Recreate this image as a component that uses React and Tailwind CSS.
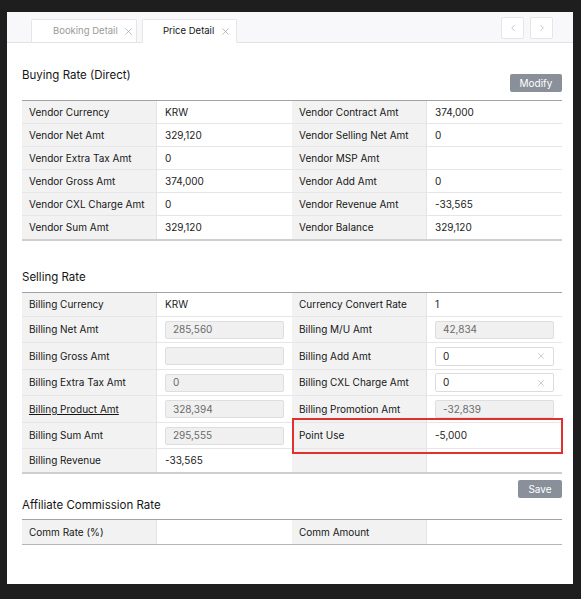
import { ChevronLeft, ChevronRight, X } from "lucide-react";

const buying = [
  ["Vendor Currency", "KRW", "Vendor Contract Amt", "374,000"],
  ["Vendor Net Amt", "329,120", "Vendor Selling Net Amt", "0"],
  ["Vendor Extra Tax Amt", "0", "Vendor MSP Amt", ""],
  ["Vendor Gross Amt", "374,000", "Vendor Add Amt", "0"],
  ["Vendor CXL Charge Amt", "0", "Vendor Revenue Amt", "-33,565"],
  ["Vendor Sum Amt", "329,120", "Vendor Balance", "329,120"],
];

function Label({ children, underline }) {
  return (
    <div
      className={`bg-[#f2f2f2] border-r border-[#e4e4e4] px-[7px] flex items-center whitespace-nowrap text-[#161616] ${
        underline ? "underline" : ""
      }`}
    >
      {children}
    </div>
  );
}

function Value({ children }) {
  return <div className="px-[8px] flex items-center whitespace-nowrap text-[#222]">{children}</div>;
}

function ReadInput({ value }) {
  return (
    <div className="px-[8px] flex items-center">
      <div className="w-[119px] h-[18px] bg-[#f0f0f0] border border-[#dedede] rounded-[2px] px-[7px] flex items-center text-[#6b6b6b]">
        {value}
      </div>
    </div>
  );
}

function EditInput({ value }) {
  return (
    <div className="px-[8px] flex items-center">
      <div className="w-[120px] h-[19px] bg-white border border-[#dcdcdc] rounded-[2px] px-[7px] flex items-center justify-between text-[#222]">
        <span>{value}</span>
        <X size={10} strokeWidth={2} className="text-[#c4c4c4]" />
      </div>
    </div>
  );
}

function Row({ h, children, last }) {
  return (
    <div
      className={`grid grid-cols-[135px_135px_135px_135px] ${h} ${
        last ? "" : "border-b border-[#e6e6e6]"
      }`}
    >
      {children}
    </div>
  );
}

function Title({ children, className = "" }) {
  return <div className={`text-[11.5px] leading-[16px] text-[#161616] ${className}`}>{children}</div>;
}

export default function App() {
  return (
    <div
      className="min-h-screen bg-[#1e1e1e] pt-[12px] pl-[7px] pb-[15px]"
      style={{ fontFamily: "Inter, 'Noto Sans', sans-serif" }}
    >
      <div className="bg-white w-[566px] h-[572px] flex flex-col text-[10px]">
        {/* tab bar */}
        <div className="h-[31px] bg-[#f8f8fa] border-b border-[#e2e2e6] flex items-end pl-[24px] pr-[20px]">
          <div className="h-[24px] w-[106px] -mb-px bg-white border border-[#e6e6e9] border-b-[#e2e2e6] rounded-t-[2px] flex items-center pl-[21px] whitespace-nowrap text-[#9a9a9a] text-[9.5px]">
            <span>Booking Detail</span>
            <X size={11} strokeWidth={1.4} className="ml-[5px] text-[#9a9a9a]" />
          </div>
          <div className="h-[24px] w-[95px] ml-[5px] -mb-px bg-white border border-[#e6e6e9] border-b-white rounded-t-[2px] flex items-center pl-[20px] whitespace-nowrap text-[#161616] text-[9.5px]">
            <span>Price Detail</span>
            <X size={11} strokeWidth={1.4} className="ml-[6px] text-[#9a9a9a]" />
          </div>
          <div className="ml-auto self-start mt-[5px] flex gap-[6px]">
            <button className="w-[23px] h-[22px] bg-white border border-[#e6e6e9] rounded-[2px] flex items-center justify-center text-[#b0b0b0]">
              <ChevronLeft size={10} strokeWidth={1.8} />
            </button>
            <button className="w-[23px] h-[22px] bg-white border border-[#e6e6e9] rounded-[2px] flex items-center justify-center text-[#b0b0b0]">
              <ChevronRight size={10} strokeWidth={1.8} />
            </button>
          </div>
        </div>

        <div className="pl-[15px] w-[555px]">
          {/* Buying Rate */}
          <div className="flex items-start justify-between w-[540px]">
            <Title className="pt-[24px]">Buying Rate (Direct)</Title>
            <button className="mt-[31px] w-[52px] h-[18px] bg-[#8a9099] text-white rounded-[2px] text-[10px] flex items-center justify-center">
              Modify
            </button>
          </div>
          <div className="mt-[8px] w-[540px] border-t border-[#a3a3a3] border-b-2 border-b-[#cfcfcf]">
            {buying.map((r, i) => (
              <Row key={r[0]} h="h-[23px]" last={i === buying.length - 1}>
                <Label>{r[0]}</Label>
                <Value>{r[1]}</Value>
                <Label>{r[2]}</Label>
                <Value>{r[3]}</Value>
              </Row>
            ))}
          </div>

          {/* Selling Rate */}
          <Title className="mt-[28px]">Selling Rate</Title>
          <div className="mt-[7px] w-[540px] border-t border-[#a3a3a3] border-b-2 border-b-[#cfcfcf]">
            <Row h="h-[24px]">
              <Label>Billing Currency</Label>
              <Value>KRW</Value>
              <Label>Currency Convert Rate</Label>
              <Value>1</Value>
            </Row>
            <Row h="h-[26px]">
              <Label>Billing Net Amt</Label>
              <ReadInput value="285,560" />
              <Label>Billing M/U Amt</Label>
              <ReadInput value="42,834" />
            </Row>
            <Row h="h-[27px]">
              <Label>Billing Gross Amt</Label>
              <ReadInput value="" />
              <Label>Billing Add Amt</Label>
              <EditInput value="0" />
            </Row>
            <Row h="h-[26px]">
              <Label>Billing Extra Tax Amt</Label>
              <ReadInput value="0" />
              <Label>Billing CXL Charge Amt</Label>
              <EditInput value="0" />
            </Row>
            <Row h="h-[27px]">
              <Label underline>Billing Product Amt</Label>
              <ReadInput value="328,394" />
              <Label>Billing Promotion Amt</Label>
              <ReadInput value="-32,839" />
            </Row>
            <div className="grid grid-cols-[135px_135px_270px] h-[26px] border-b border-[#e6e6e6]">
              <Label>Billing Sum Amt</Label>
              <ReadInput value="295,555" />
              <div className="relative grid grid-cols-[135px_135px]">
                <Label>Point Use</Label>
                <Value>-5,000</Value>
                <div className="absolute -top-[5px] -bottom-[6px] left-0 -right-px border-2 border-[#e0312f] pointer-events-none" />
              </div>
            </div>
            <Row h="h-[23px]" last>
              <Label>Billing Revenue</Label>
              <Value>-33,565</Value>
              <Label></Label>
              <Value></Value>
            </Row>
          </div>

          <div className="flex justify-end w-[540px]">
            <button className="mt-[6px] w-[44px] h-[18px] bg-[#8a9099] text-white rounded-[2px] text-[10px] flex items-center justify-center">
              Save
            </button>
          </div>

          {/* Affiliate */}
          <Title className="-mt-px">Affiliate Commission Rate</Title>
          <div className="mt-[6px] w-[540px] border-t border-[#a3a3a3] border-b border-b-[#b5b5b5]">
            <Row h="h-[24px]" last>
              <Label>Comm Rate (%)</Label>
              <Value></Value>
              <Label>Comm Amount</Label>
              <Value></Value>
            </Row>
          </div>
        </div>
      </div>
    </div>
  );
}
